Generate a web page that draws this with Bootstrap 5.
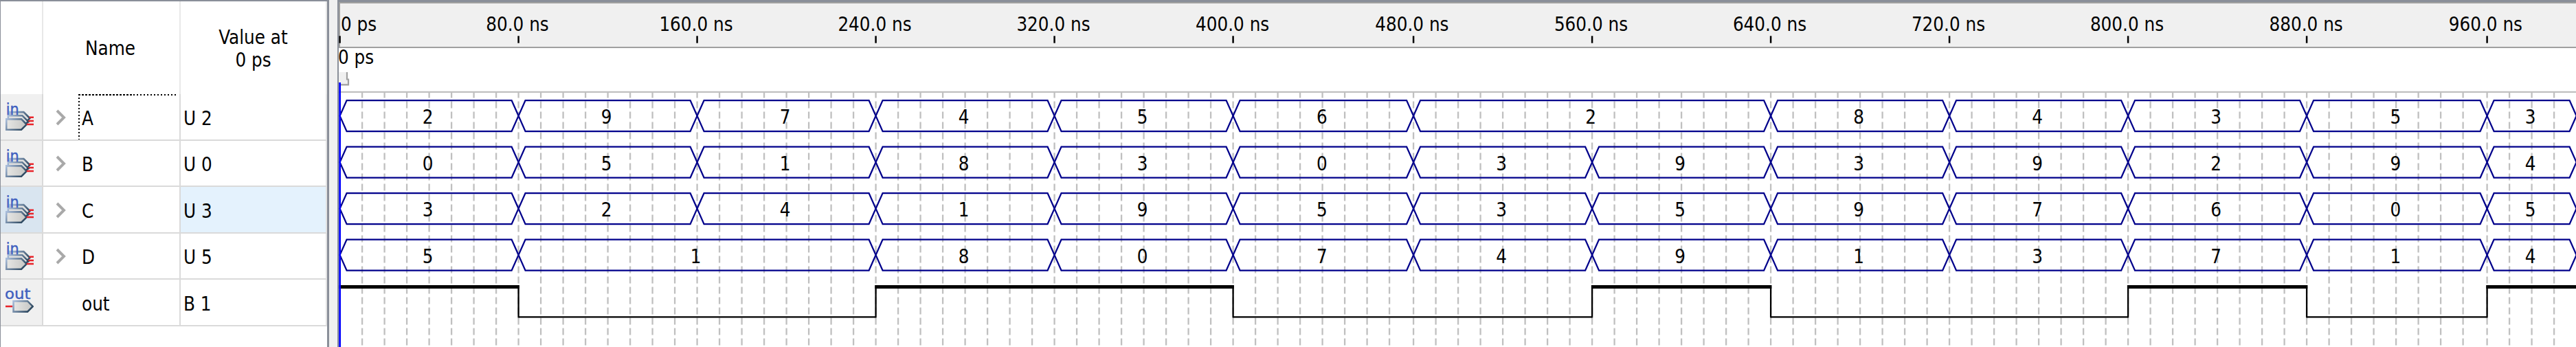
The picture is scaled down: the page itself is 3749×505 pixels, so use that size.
<!DOCTYPE html>
<html lang="en">
<head>
<meta charset="utf-8">
<title>Waveform viewer</title>
<link href="https://cdn.jsdelivr.net/npm/bootstrap@5.3.0/dist/css/bootstrap.min.css" rel="stylesheet">
<style>
  html { height: 505px; overflow: hidden; }
  body { height: 505px; background: #f0f0f0; color: #000; font: 27.5px/32.5px "DejaVu Sans Condensed", "DejaVu Sans", sans-serif; font-stretch: condensed; }
  .signals { width: 479px; border: solid #8a8f99; border-width: 2px 3px 0 1px; }
  .sig-row { height: 67.5px; }
  .sig-row > div { border-bottom: 2px solid #dadada; border-right: 2px solid #dadada; }
  .sig-head { height: 135px; }
  .sig-head > div { padding-top: 2px; border-right: 2px solid #e8e8e8; }
  .c-icon { width: 62px; padding: 0 0 0 7px; }
  .c-name { width: 200px; }
  .sig-head .c-name { padding-right: 3px; }
  .c-value { width: 213px; }
  .sig-row .c-icon { background: #f0f0f0; }
  .sig-row .c-value { padding: 4px 0 0 4px; border-right-color: #e4e4e4; }
  .sig-row.current .c-icon { background: #d9e5f0; }
  .sig-row.current .c-value { background: #e4f2fd; }
  .twisty { width: 51px; padding: 2px 0 0 18px; }
  .sig-name { padding: 4px 0 0 5px; }
  .focus-cell { background:
      repeating-linear-gradient(90deg, #000 0 2.5px, transparent 2.5px 5px) 0 0 / 145px 2px no-repeat,
      repeating-linear-gradient(180deg, #000 0 2.5px, transparent 2.5px 5px) 0 0 / 2px 100% no-repeat; }
  .splitter { width: 12px; }
  .waves { border: solid #8a8f99; border-width: 3px 0 0 2px; }
  .ruler { height: 67px; background: #f0f0f0; border: solid #a0a0a0; border-width: 2px 0 2px 2px; }
  .ruler-labels { padding-top: 14px; }
  .origin { width: 128px; padding-left: 1px; }
  .marker { height: 66.75px; padding-top: 2.5px; }
  .marker span { line-height: 20px; margin-left: -1px; }
  .bus-row { height: 67.5px; }
  .bus-row > div { padding-right: 1px; }
  .plot { top: 0; left: 0; }
</style>
</head>
<body class="d-flex overflow-hidden m-0">
<section class="signals bg-white d-flex flex-column flex-shrink-0" id="signals">
  <div class="sig-head d-flex flex-shrink-0">
    <div class="c-icon"></div>
    <div class="c-name d-flex align-items-center justify-content-center">Name</div>
    <div class="c-value d-flex align-items-center justify-content-center text-center">Value at<br>0 ps</div>
  </div>
</section>
<div class="splitter flex-shrink-0"></div>
<section class="waves bg-white flex-fill position-relative overflow-hidden">
  <div class="ruler overflow-hidden"><div class="ruler-labels d-flex text-nowrap" id="labels"></div></div>
  <div class="marker d-flex align-items-start"><span>0 ps</span></div>
  <div class="position-relative z-1" id="buses"></div>
  <svg class="plot position-absolute" id="plot" width="3256" height="502" viewBox="493 3 3256 502" fill="none"></svg>
  <svg width="0" height="0" class="plot position-absolute">
    <defs>
      <linearGradient id="edge" x1="0" x2="1" y1="0" y2=".5"><stop stop-color="#a9bddb"/><stop offset="1" stop-color="#304b63"/></linearGradient>
      <linearGradient id="face" x1="0" x2="1"><stop stop-color="#e6e6e4"/><stop offset="1" stop-color="#c6c6c4"/></linearGradient>
      <symbol id="pin-in" viewBox="0 0 16 16">
        <path d="M2.5 9V5.5H10.3L13.8 9L11 12" fill="#e0e0df" stroke="url(#edge)"/>
        <path d="M1.5 10V7.5H9.5L13 11L10 13" fill="#e0e0df" stroke="url(#edge)"/>
        <path d="M.5 9.5H9L12 12.5L9 15.5H.5Z" fill="url(#face)" stroke="url(#edge)"/>
        <path d="M13.5 8.5H16M13 10.5H16M12 12.5H16" stroke="#e8252b"/>
        <text x=".3" y="7" font-size="9" fill="#3f5fbf" stroke="#3f5fbf" stroke-width=".15">in</text>
      </symbol>
      <symbol id="pin-out" viewBox="0 0 16 16">
        <path d="M0 10.5H4" stroke="#e8252b"/>
        <path d="M4.5 7.5H12.5L15.5 10.5L12.5 13.5H4.5Z" fill="url(#face)" stroke="url(#edge)"/>
        <text x="-.4" y="6.1" font-size="8.4" textLength="14.6" lengthAdjust="spacingAndGlyphs" fill="#3f5fbf" stroke="#3f5fbf" stroke-width=".15">out</text>
      </symbol>
    </defs>
  </svg>
</section>

<script src="https://cdn.jsdelivr.net/npm/bootstrap@5.3.0/dist/js/bootstrap.bundle.min.js"></script>
<script>
  const X0 = 494.6;
  // time in ns to horizontal position, snapped to the 2.5px device grid
  const xAt = t => X0 + 2.5 * Math.floor(t * 1250 / 960);
  // values per 80 ns slot; null extends the previous value
  const buses = [
    { name: 'A', value: 'U 2', data: [2,9,7,4,5,6,2,null,8,4,3,5,3] },
    { name: 'B', value: 'U 0', data: [0,5,1,8,3,0,3,9,3,9,2,9,4] },
    { name: 'C', value: 'U 3', data: [3,2,4,1,9,5,3,5,9,7,6,0,5], current: true },
    { name: 'D', value: 'U 5', data: [5,1,null,8,0,7,4,9,1,3,7,1,4] },
  ];
  const outEdges = [80, 240, 400, 560, 640, 800, 880, 960];

  const signals = document.getElementById('signals');
  [...buses, { name: 'out', value: 'B 1', out: true }].forEach((s, i) => {
    signals.insertAdjacentHTML('beforeend', `
      <div class="sig-row d-flex flex-shrink-0 ${s.current ? 'current' : ''}">
        <div class="c-icon d-flex align-items-center"><svg width="41" height="41"><use href="#pin-${s.out ? 'out' : 'in'}"/></svg></div>
        <div class="c-name d-flex align-items-stretch">
          <div class="twisty d-flex align-items-center">${s.out ? '' : '<svg width="16" height="24" viewBox="0 0 16 24" fill="none" stroke="#a9a9a9" stroke-width="4"><path d="M2 2L12 12L2 22"/></svg>'}</div>
          <div class="sig-name flex-fill d-flex align-items-center ${i ? '' : 'focus-cell'}">${s.name}</div>
        </div>
        <div class="c-value d-flex align-items-center">${s.value}</div>
      </div>`);
  });

  let labels = '<div class="origin flex-shrink-0">0 ps</div>';
  for (let t = 80; t <= 960; t += 80) {
    const w = (xAt(t + 80) - xAt(t - 80)) / 2;
    labels += `<div class="flex-shrink-0 text-center" style="width:${w}px">${t}.0 ns</div>`;
  }
  document.getElementById('labels').innerHTML = labels;

  let plot = '';
  for (let t = 10; t < 1000; t += 10)
    plot += `<path d="M${xAt(t)} 132.5V505" stroke="#c0c0c0" stroke-width="2.3" stroke-dasharray="10 5"/>`;
  plot += '<path d="M493 125V133H3749V125Z" fill="#fff"/><path d="M493 133.8H3749" stroke="#c0c0c0" stroke-width="2.3"/>';
  for (let t = 0; t <= 960; t += 80)
    plot += `<path d="M${xAt(t)} 52.3V62.7" stroke="#000" stroke-width="2.5"/>`;

  let rows = '';
  buses.forEach((b, i) => {
    const top = 146.1 + 67.5 * i, mid = top + 22.5, bot = top + 45;
    rows += '<div class="bus-row d-flex align-items-center">';
    for (let k = 0; k < b.data.length; k++) {
      if (b.data[k] === null) continue;
      let e = k + 1;
      while (b.data[e] === null) e++;
      const a = xAt(k * 80), z = xAt(Math.min(e * 80, 1000));
      plot += `<path d="M${a} ${mid}L${a + 10} ${top}H${z - 10}L${z} ${mid}L${z - 10} ${bot}H${a + 10}Z" stroke="#00008b" stroke-width="2.3"/>`;
      rows += `<div class="flex-shrink-0 text-center" style="width:${z - a}px">${b.data[k]}</div>`;
    }
    rows += '</div>';
  });
  document.getElementById('buses').innerHTML = rows;

  // single-bit output: thick bar when high, thin line when low
  let from = 0, high = true;
  [...outEdges, 1000].forEach(t => {
    const a = xAt(from), z = xAt(t);
    plot += high
      ? `<path d="M${a - 1.2} 417.5H${z + 1.2}" stroke="#000" stroke-width="5"/>`
      : `<path d="M${a} 461.3H${z}" stroke="#000" stroke-width="2.3"/>`;
    if (t < 1000) plot += `<path d="M${z} 415V462.4" stroke="#000" stroke-width="2.3"/>`;
    from = t; high = !high;
  });
  // time-bar handle and its line
  plot += '<path d="M493 105H505V115H507V123H493Z" fill="#f0f0f0"/><path d="M505 105V115.5H507V123.3H495" stroke="#a0a0a0" stroke-width="2.2"/>';
  plot += `<path d="M${X0} 120V505" stroke="#00f" stroke-width="2.8"/>`;
  document.getElementById('plot').innerHTML = plot;
</script>
</body>
</html>
